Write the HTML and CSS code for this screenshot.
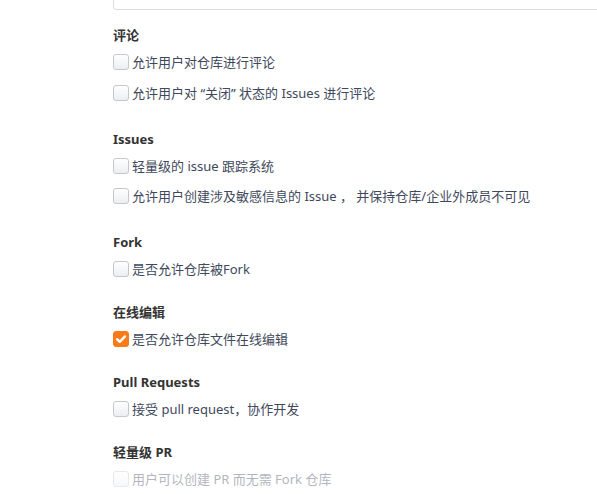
FILE: index.html
```html
<!DOCTYPE html>
<html lang="zh-CN">
<head>
<meta charset="utf-8">
<title>仓库设置</title>
<link rel="stylesheet" href="styles.css">
</head>
<body>
<div class="page">
  <div class="top-box"></div>

  <div class="section tall first">
    <div class="section-title">评论</div>
    <label class="option"><span class="checkbox"></span><span class="label">允许用户对仓库进行评论</span></label>
    <label class="option"><span class="checkbox"></span><span class="label">允许用户对 “关闭” 状态的 Issues 进行评论</span></label>
  </div>

  <div class="section tall">
    <div class="section-title">Issues</div>
    <label class="option"><span class="checkbox"></span><span class="label">轻量级的 issue 跟踪系统</span></label>
    <label class="option"><span class="checkbox"></span><span class="label">允许用户创建涉及敏感信息的 Issue ， 并保持仓库/企业外成员不可见</span></label>
  </div>

  <div class="section">
    <div class="section-title">Fork</div>
    <label class="option"><span class="checkbox"></span><span class="label">是否允许仓库被Fork</span></label>
  </div>

  <div class="section">
    <div class="section-title">在线编辑</div>
    <label class="option"><span class="checkbox checked"><svg viewBox="0 0 16 16" width="16" height="16"><path d="M4 8.2 L6.8 10.8 L12 5.4" fill="none" stroke="#fff" stroke-width="2.4" stroke-linecap="round" stroke-linejoin="round"/></svg></span><span class="label">是否允许仓库文件在线编辑</span></label>
  </div>

  <div class="section">
    <div class="section-title">Pull Requests</div>
    <label class="option"><span class="checkbox"></span><span class="label">接受 pull request，协作开发</span></label>
  </div>

  <div class="section">
    <div class="section-title">轻量级 PR</div>
    <label class="option disabled"><span class="checkbox"></span><span class="label">用户可以创建 PR 而无需 Fork 仓库</span></label>
  </div>
</div>
</body>
</html>
```

FILE: styles.css
```css
html, body {
  margin: 0;
  padding: 0;
  background: #fff;
}

body {
  font-family: "Noto Sans", "Noto Sans CJK SC", sans-serif;
  font-size: 13px;
  color: #40485b;
  overflow: hidden;
}

.page {
  padding-left: 113px;
  display: flex;
  flex-direction: column;
}

.top-box {
  height: 9px;
  margin-right: -12px;
  border: 1px solid #dcdde0;
  border-top: none;
  border-radius: 0 0 3px 3px;
  margin-bottom: 15px;
}

.section {
  display: flex;
  flex-direction: column;
}

.section + .section {
  margin-top: 23px;
}

.section.tall {
  padding-bottom: 3px;
}

.section-title {
  line-height: 20px;
  height: 20px;
  font-weight: bold;
  color: #333;
  margin-bottom: 7px;
}

.option {
  display: flex;
  align-items: center;
  height: 20px;
  gap: 3px;
}

.option + .option {
  margin-top: 10px;
}

.section.first .option + .option {
  margin-top: 11px;
}

.checkbox {
  width: 14px;
  height: 14px;
  border: 1px solid #c5c7cc;
  border-radius: 3px;
  background: linear-gradient(#ffffff, #eceef1);
  flex: none;
  display: flex;
  align-items: center;
  justify-content: center;
}

.checkbox.checked {
  background: #f97a17;
  border-color: #f97a17;
}

.checkbox svg {
  display: block;
  flex: none;
}

.label {
  line-height: 20px;
  white-space: nowrap;
}

.option.disabled {
  opacity: 0.4;
}
```
